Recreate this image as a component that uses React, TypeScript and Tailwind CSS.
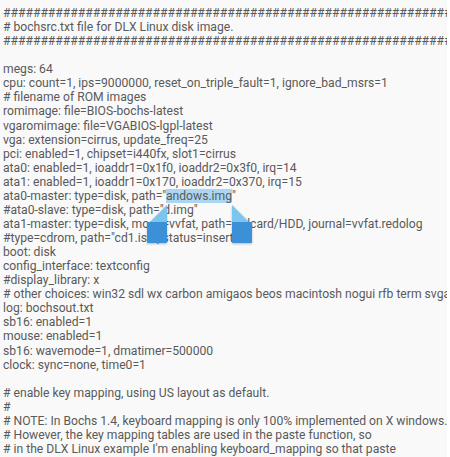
import React from "react";

const lines: string[] = [
  "###############################################################",
  "# bochsrc.txt file for DLX Linux disk image.",
  "###############################################################",
  "",
  "megs: 64",
  "cpu: count=1, ips=9000000, reset_on_triple_fault=1, ignore_bad_msrs=1",
  "# filename of ROM images",
  "romimage: file=BIOS-bochs-latest",
  "vgaromimage: file=VGABIOS-lgpl-latest",
  "vga: extension=cirrus, update_freq=25",
  "pci: enabled=1, chipset=i440fx, slot1=cirrus",
  "ata0: enabled=1, ioaddr1=0x1f0, ioaddr2=0x3f0, irq=14",
  "ata1: enabled=1, ioaddr1=0x170, ioaddr2=0x370, irq=15",
  "SEL",
  "#ata0-slave: type=disk, path=\"d.img\"",
  "ata1-master: type=disk, mode=vvfat, path=/sdcard/HDD, journal=vvfat.redolog",
  "#type=cdrom, path=\"cd1.iso\", status=inserted",
  "boot: disk",
  "config_interface: textconfig",
  "#display_library: x",
  "# other choices: win32 sdl wx carbon amigaos beos macintosh nogui rfb term svga",
  "log: bochsout.txt",
  "sb16: enabled=1",
  "mouse: enabled=1",
  "sb16: wavemode=1, dmatimer=500000",
  "clock: sync=none, time0=1",
  "",
  "# enable key mapping, using US layout as default.",
  "#",
  "# NOTE: In Bochs 1.4, keyboard mapping is only 100% implemented on X windows.",
  "# However, the key mapping tables are used in the paste function, so",
  "# in the DLX Linux example I'm enabling keyboard_mapping so that paste",
  "# will work.  Cut&Paste is currently implemented on win32 and X windows only.",
];

function Handle({ side }: { side: "left" | "right" }) {
  return (
    <svg width="22" height="40" viewBox="0 0 22 40" className="block drop-shadow-[0_1px_1px_rgba(0,0,0,0.25)]">
      {side === "left" ? (
        <path d="M21 0 L1 20 L1 38 L21 38 Z" fill="#7cc6ee" />
      ) : (
        <path d="M1 0 L21 20 L21 38 L1 38 Z" fill="#7cc6ee" />
      )}
      <path d="M1 17 L21 17 L21 37 Q21 38 20 38 L2 38 Q1 38 1 37 Z" fill="#3b90d8" />
    </svg>
  );
}

export default function App() {
  return (
    <div className="w-[450px] h-[457px] overflow-hidden bg-white">
      <div
        className="relative w-[447px] h-[457px] overflow-hidden bg-[#f9f9f9] pl-[3px] pt-[6px] text-[12.15px] leading-[14.07px] text-[#5a5a5a] whitespace-pre"
        style={{ fontFamily: "Roboto, 'Noto Sans', sans-serif" }}
      >
        {lines.map((l, i) =>
          l === "SEL" ? (
            <div key={i} className="h-[14.07px]">
              ata0-master: type=disk, path="
              <span className="relative bg-[#aad6f2]">
                andows.img
                <span className="absolute right-full mr-[-2px] top-[calc(100%+2px)]">
                  <Handle side="left" />
                </span>
                <span className="absolute left-full ml-[-1px] top-[calc(100%+2px)]">
                  <Handle side="right" />
                </span>
              </span>"
            </div>
          ) : (
            <div key={i} className="h-[14.07px]">
              {l}
            </div>
          )
        )}
      </div>
    </div>
  );
}
